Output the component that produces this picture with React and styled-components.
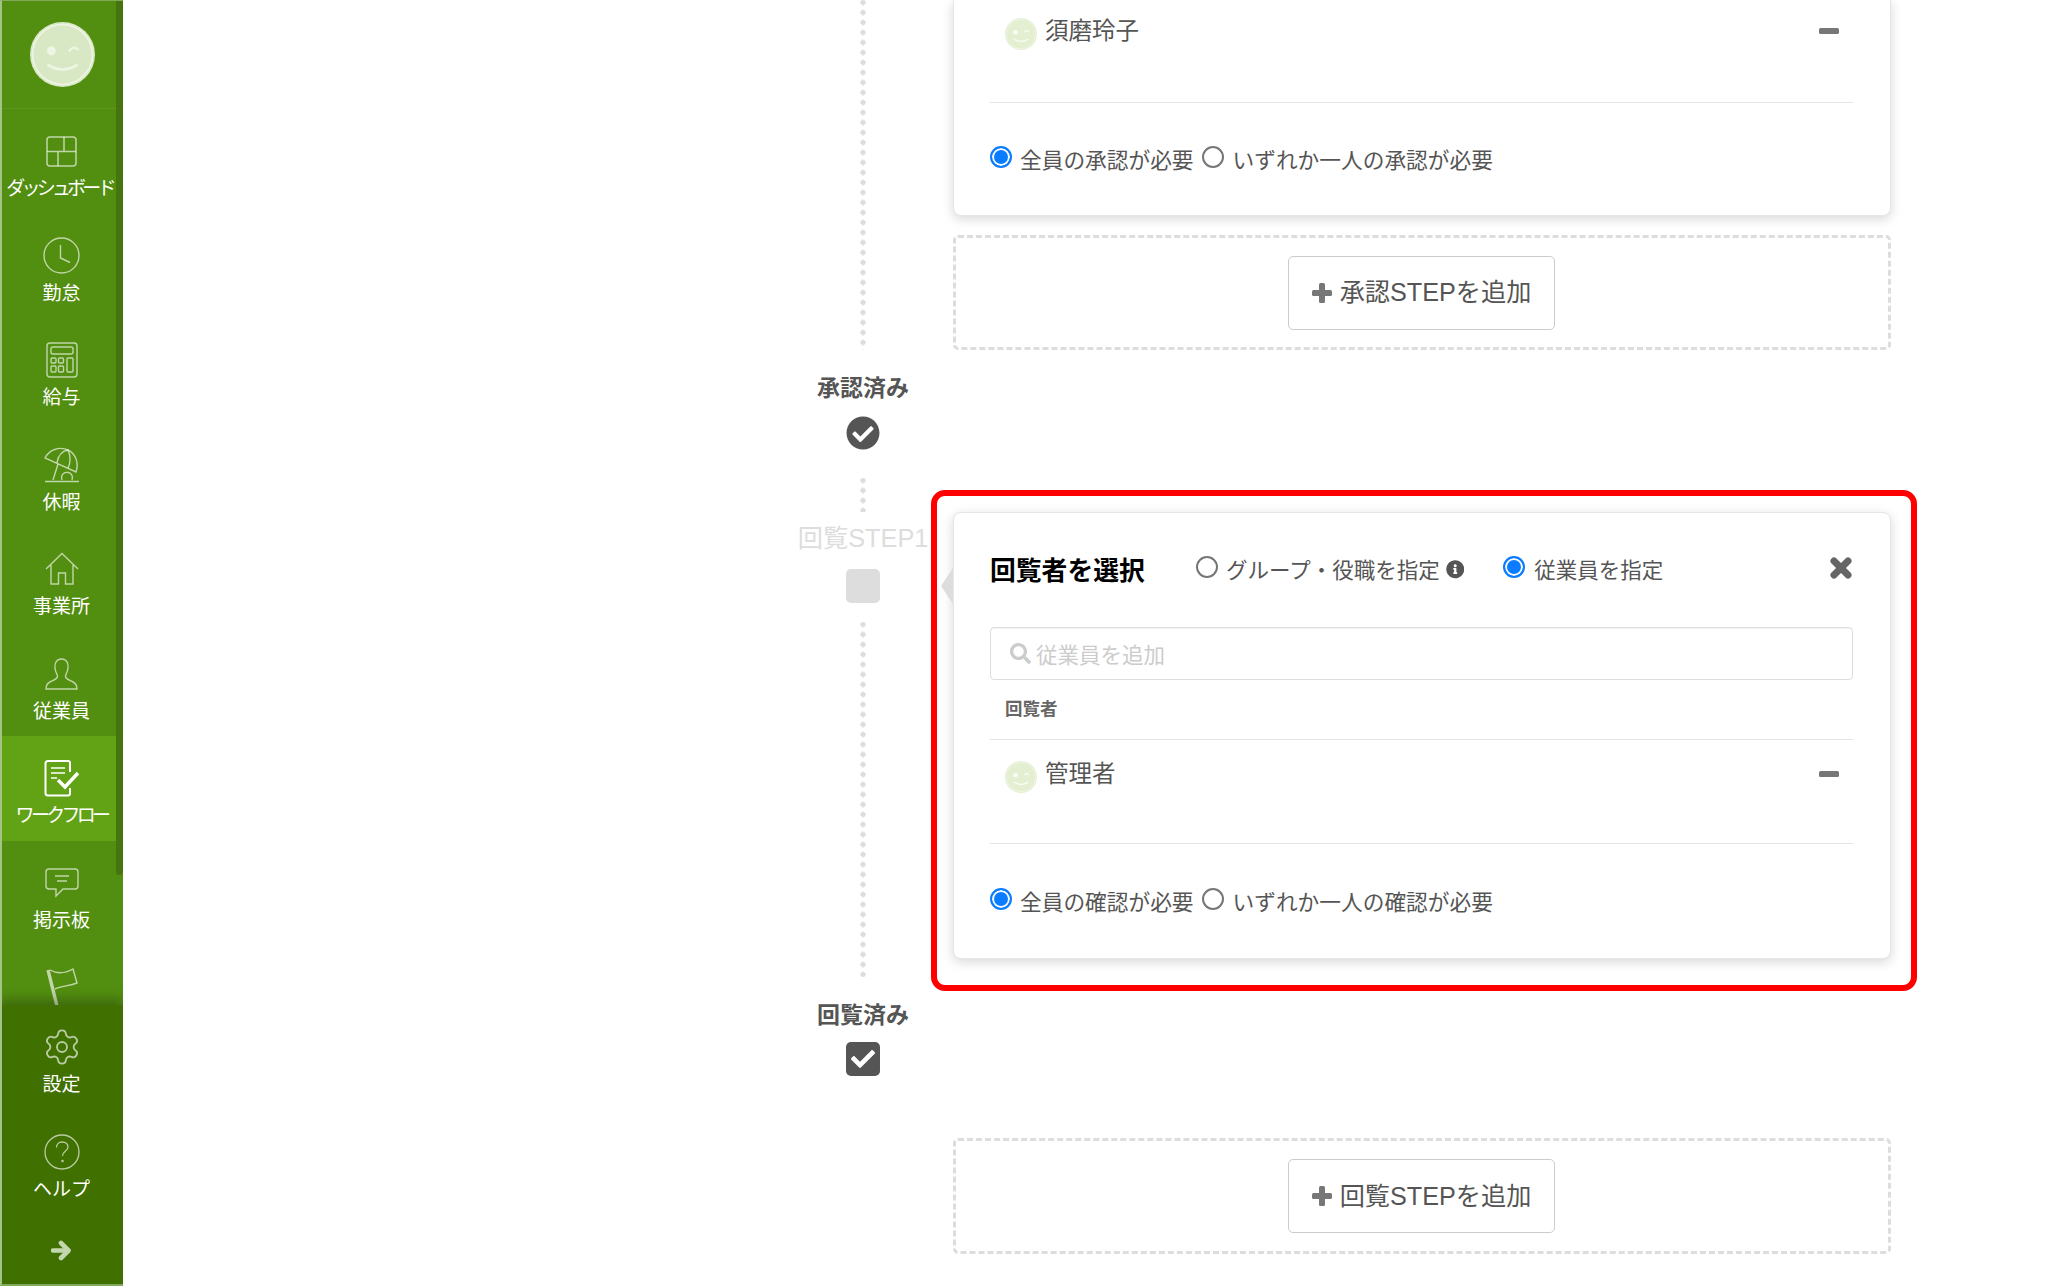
import React from 'react'
import styled, { createGlobalStyle } from 'styled-components'
import { FaCheck, FaCheckCircle, FaInfoCircle, FaSearch } from 'react-icons/fa'
import { Settings } from 'lucide-react'

const GlobalStyle = createGlobalStyle`
  html, body {
    margin: 0;
    padding: 0;
    background: #fff;
  }
  body {
    font-family: "Liberation Sans", "Noto Sans CJK JP", sans-serif;
    color: #555;
  }
`

const Page = styled.div`
  display: flex;
  width: 2048px;
  height: 1286px;
  overflow: hidden;
  background: #fff;
`

/* sidebar */

const Sidebar = styled.aside`
  position: relative;
  flex: 0 0 123px;
  display: flex;
  flex-direction: column;
  height: 1286px;
  background: #528e10;
  overflow: hidden;

  &::before {
    content: '';
    position: absolute;
    inset: 0;
    z-index: 5;
    border-left: 2px solid #a3c486;
    border-top: 1px solid #80a95a;
    border-bottom: 2px solid #80a95a;
    pointer-events: none;
  }
`

const ScrollThumb = styled.div`
  position: absolute;
  top: 0;
  right: 0;
  width: 7px;
  height: 875px;
  border-radius: 0 0 4px 4px;
  background: #46750f;
  z-index: 3;
`

const Logo = styled.div`
  flex: 0 0 109px;
  box-sizing: border-box;
  margin-bottom: -2px;
  padding: 22px 0 0 30px;
  border-bottom: 1px solid #5c9620;
`

const Nav = styled.nav`
  flex: 1;
  min-height: 0;
  overflow: hidden;
`

const NavItem = styled.div`
  position: relative;
  height: 104.5px;
  box-sizing: border-box;
  padding-top: ${p => p.$top || 26}px;
  display: flex;
  flex-direction: column;
  align-items: center;
  color: ${p => (p.$active ? '#fff' : 'rgba(255,255,255,0.64)')};

  &::before {
    content: '';
    display: ${p => (p.$active ? 'block' : 'none')};
    position: absolute;
    top: 2px;
    left: 0;
    right: 0;
    height: 105px;
    background: #62a315;
  }
  > * {
    position: relative;
  }
`

const NavIcon = styled.div`
  width: 40px;
  height: 36px;
  flex: none;
  display: flex;
  align-items: center;
  justify-content: center;
  svg {
    display: block;
    fill: none;
    stroke: currentColor;
  }
`

const NavLabel = styled.div`
  margin-top: 7px;
  height: 26px;
  line-height: 26px;
  font-size: 19px;
  color: #fff;
  white-space: nowrap;
  letter-spacing: ${p => p.$squeeze || 0}px;
  margin-left: ${p => p.$shift || 0}px;
`

const Footer = styled.div`
  position: relative;
  z-index: 2;
  flex: 0 0 281px;
  box-sizing: border-box;
  background: #3f7000;
  box-shadow: 0 -6px 10px rgba(0, 0, 0, 0.25);
`

const Collapse = styled.div`
  display: flex;
  justify-content: center;
  margin-top: 26px;
`

/* main column */

const Main = styled.main`
  flex: 1;
  padding-left: 650px;
`

const Flow = styled.div`
  width: 1118px;
  display: flex;
  flex-direction: column;
`

const StepRow = styled.div`
  display: flex;
  margin-top: ${p => p.$gap || 0}px;
`

const Rail = styled.div`
  flex: 0 0 180px;
  display: flex;
  flex-direction: column;
  align-items: center;
`

const Body = styled.div`
  flex: 0 0 938px;
  padding: ${p => p.$top || 0}px 0 ${p => p.$bottom || 0}px;
`

const Dots = styled.div`
  width: 100%;
  flex: ${p => (p.$height ? `0 0 ${p.$height}px` : '1')};
  background: radial-gradient(circle, #ddd 2.4px, transparent 3px) center -2.5px / 10px 10px repeat-y;
`

const StepName = styled.div`
  height: 30px;
  line-height: 30px;
  font-size: 23px;
  font-weight: 700;
  color: #555;
  white-space: nowrap;
`

const PendingName = styled.div`
  margin-top: 11px;
  height: 30px;
  line-height: 30px;
  font-size: 25.3px;
  color: #ddd;
  white-space: nowrap;
`

const DoneCircle = styled.div`
  margin-top: 13px;
  height: 34px;
  color: #555;
  font-size: 34px;
  line-height: 0;
`

const NodeSquare = styled.div`
  width: 34px;
  height: 34px;
  border-radius: 5px;
  background: ${p => p.$color};
  margin-top: ${p => p.$top}px;
  margin-bottom: ${p => p.$bottom || 0}px;
  display: flex;
  align-items: center;
  justify-content: center;
  color: #fff;
  font-size: 24px;
`

const Card = styled.section`
  position: relative;
  box-sizing: border-box;
  background: #fff;
  border: 1px solid #e6e6e6;
  border-top: ${p => (p.$cut ? 'none' : '1px solid #e6e6e6')};
  border-radius: ${p => (p.$cut ? '0 0 8px 8px' : '8px')};
  box-shadow: 0 3px 12px rgba(0, 0, 0, 0.16);
  padding: ${p => (p.$cut ? '0 37px 0 36px' : '37px 37px 0 36px')};
`

const CardArrow = styled.div`
  position: absolute;
  left: -13px;
  top: 55px;
  width: 0;
  height: 0;
  border-top: 18px solid transparent;
  border-bottom: 18px solid transparent;
  border-right: 12px solid #ddd;
`

const Highlight = styled.div`
  position: absolute;
  top: -23px;
  left: -23px;
  right: -27px;
  bottom: -33px;
  border: 6px solid #f00;
  border-radius: 14px;
  pointer-events: none;
`

const CardHead = styled.header`
  display: flex;
  align-items: center;
  box-sizing: border-box;
  height: 40px;
  padding-bottom: 4px;
`

const CardTitle = styled.h2`
  flex: none;
  margin: 0 52px 0 0;
  font-size: 25.8px;
  font-weight: 700;
  color: #000;
  width: 154px;
  white-space: nowrap;
`

const RadioLabel = styled.label`
  display: flex;
  align-items: center;
  gap: ${p => p.$gap || 8}px;
  margin-left: ${p => p.$before || 0}px;
  margin-right: ${p => p.$after || 0}px;
  font-size: ${p => p.$size || 21.5}px;
  color: #555;
  white-space: nowrap;
`

const Radio = styled.span`
  flex: none;
  box-sizing: border-box;
  width: 22px;
  height: 22px;
  margin-bottom: 3px;
  border-radius: 50%;
  border: 2px solid ${p => (p.$on ? '#0a7cff' : '#767676')};
  background: ${p => (p.$on ? '#0a7cff' : '#fff')};
  box-shadow: ${p => (p.$on ? 'inset 0 0 0 2px #fff' : 'none')};
`

const InfoMark = styled.span`
  display: flex;
  font-size: 18.5px;
  color: #555;
  margin-top: 3px;
`

const CloseMark = styled.span`
  margin-left: auto;
  margin-right: 1px;
  display: flex;
  color: #666;
`

const SearchBox = styled.div`
  margin-top: 37px;
  height: 53px;
  box-sizing: border-box;
  display: flex;
  align-items: center;
  gap: 5px;
  padding-left: 19px;
  border: 1px solid #ddd;
  border-radius: 4px;
  box-shadow: inset 0 1px 1px rgba(0, 0, 0, 0.05);
  color: #ccc;
  font-size: 21.5px;
  svg {
    font-size: 21px;
  }
`

const ListTitle = styled.div`
  height: 60px;
  box-sizing: border-box;
  line-height: 59px;
  padding-left: 15px;
  font-size: 17.5px;
  font-weight: 700;
  color: #666;
  border-bottom: 1px solid #e5e5e5;
`

const PersonRow = styled.div`
  height: ${p => p.$height}px;
  box-sizing: border-box;
  padding: ${p => p.$pad}px 14px 0 15px;
  display: flex;
  align-items: flex-start;
  border-bottom: 1px solid #e5e5e5;
`

const PersonName = styled.span`
  margin-left: 8px;
  margin-top: -4px;
  font-size: 23.5px;
  line-height: 34px;
  color: #555;
`

const RemoveMark = styled.span`
  margin-left: auto;
  margin-top: 10px;
  display: flex;
  color: #777;
`

const Requirement = styled.div`
  display: flex;
  align-items: flex-start;
  box-sizing: border-box;
  height: ${p => p.$height}px;
  padding-top: ${p => p.$pad}px;
`

const AddBox = styled.div`
  box-sizing: border-box;
  height: ${p => p.$height}px;
  margin-top: ${p => p.$top || 0}px;
  padding-right: 1px;
  display: flex;
  align-items: center;
  justify-content: center;
  border: 3px dashed #ddd;
  border-radius: 5px;
`

const AddButton = styled.div`
  box-sizing: border-box;
  width: 267px;
  height: 74px;
  padding-bottom: 5px;
  display: flex;
  align-items: center;
  justify-content: center;
  gap: 8px;
  border: 1px solid #ccc;
  border-radius: 5px;
  font-size: 25.2px;
  color: #555;
  white-space: nowrap;
`

/* drawings */

const Smiley = ({ size, disc, ring, mark }) => (
  <svg width={size} height={size} viewBox="0 0 64 64" style={{ display: 'block' }}>
    <circle cx="32" cy="32" r="32" fill={disc} />
    <circle cx="32" cy="32" r="29.5" fill="none" stroke={ring} strokeWidth="1.6" />
    <circle cx="21" cy="28.5" r="4.4" fill={mark} />
    <path d="M39 28 Q43 23 47 27" fill="none" stroke={mark} strokeWidth="2.4" strokeLinecap="round" />
    <path d="M18 42.5 Q32 51 46 42.5" fill="none" stroke={mark} strokeWidth="2.4" strokeLinecap="round" />
  </svg>
)

const PlusMark = () => (
  <svg width="20" height="20" viewBox="0 0 20 20" fill="#777" style={{ marginTop: 5 }}>
    <rect x="7" y="0" width="6" height="20" rx="1.5" />
    <rect x="0" y="7" width="20" height="6" rx="1.5" />
  </svg>
)

const MinusMark = () => (
  <svg width="20" height="6" viewBox="0 0 20 6" fill="currentColor">
    <rect width="20" height="6" rx="1.5" />
  </svg>
)

const CrossMark = () => (
  <svg width="22" height="22" viewBox="0 0 22 22" fill="none" stroke="currentColor" strokeWidth="7" strokeLinecap="round">
    <path d="M4 4L18 18M18 4L4 18" />
  </svg>
)

const ArrowMark = () => (
  <svg width="21" height="21" viewBox="0 0 21 21" fill="none" stroke="#c3d7ae" strokeWidth="4.6" strokeLinejoin="round">
    <path d="M2 10.5H17" strokeLinecap="round" />
    <path d="M10 3L17.5 10.5L10 18" strokeLinecap="round" />
  </svg>
)

const GridIcon = () => (
  <svg width="31" height="31" viewBox="0 0 31 31" strokeWidth="1.5">
    <rect x="1" y="1" width="29" height="29" rx="3" />
    <path d="M1 15.5H30M18 1V15.5M12 15.5V30" />
  </svg>
)

const ClockIcon = () => (
  <svg width="37" height="37" viewBox="0 0 37 37" strokeWidth="1.4">
    <circle cx="18.5" cy="18.5" r="17.5" />
    <path d="M17.5 8V21L27 25.5" />
  </svg>
)

const CalcIcon = () => (
  <svg width="32" height="36" viewBox="0 0 32 36" strokeWidth="1.4">
    <rect x="1" y="1" width="30" height="34" rx="3" />
    <rect x="5" y="5" width="22" height="7" rx="2" />
    <rect x="5" y="16" width="5" height="5" rx="1" />
    <rect x="12.5" y="16" width="5" height="5" rx="1" />
    <rect x="5" y="24" width="5" height="6" rx="1" />
    <rect x="12.5" y="24" width="5" height="6" rx="1" />
    <rect x="21" y="16" width="6" height="14" rx="1" />
  </svg>
)

const UmbrellaIcon = () => (
  <svg width="36" height="36" viewBox="0 0 36 36" strokeWidth="1.4">
    <path d="M1 11 C5 3 15 -1 24 3 C32 7 35 16 32 25 Z" />
    <path d="M13 16 C14 9 18 4 24 3 C27 10 26 17 24 21" />
    <path d="M14 17 L9 33" />
    <path d="M1 34.5H35" />
    <path d="M18 33 A5.5 5.5 0 1 1 28 33" />
  </svg>
)

const HouseIcon = () => (
  <svg width="34" height="34" viewBox="0 0 34 34" strokeWidth="1.4">
    <path d="M1 17 L17 1.5 L33 17" />
    <path d="M6 13 V32 H13.5 V21 H20.5 V32 H28 V13" />
  </svg>
)

const PersonIcon = () => (
  <svg width="33" height="32" viewBox="0 0 33 32" strokeWidth="1.4">
    <path d="M16.5 1 C11.5 1 9.5 5 10 10 C10.4 14 12 16 12.5 18 C12.8 21 9 22 5 24 C2 25.5 1 28 1 31 H32 C32 28 31 25.5 28 24 C24 22 20.2 21 20.5 18 C21 16 22.6 14 23 10 C23.5 5 21.5 1 16.5 1 Z" />
  </svg>
)

const WorkflowIcon = () => (
  <svg width="36" height="37" viewBox="0 0 36 37" strokeWidth="2">
    <path d="M26 12 V3 C26 2 25 1 24 1 H4 C2.5 1 1.5 2 1.5 3.5 V33 C1.5 34.5 2.5 35.5 4 35.5 H24 C25 35.5 26 34.5 26 33 V28" />
    <path d="M7 8H21M7 13H21M7 18H13" strokeWidth="1.6" />
    <path d="M14 20 L21 27 L34 13" strokeWidth="3.4" />
  </svg>
)

const BubbleIcon = () => (
  <svg width="34" height="30" viewBox="0 0 34 30" strokeWidth="1.4">
    <path d="M4 1 H30 C32 1 33 2 33 4 V18 C33 20 32 21 30 21 H18 L11 28 V21 H4 C2 21 1 20 1 18 V4 C1 2 2 1 4 1 Z" />
    <path d="M10 8H24M12 13H22" />
  </svg>
)

const FlagIcon = () => (
  <svg width="32" height="38" viewBox="0 0 32 38" strokeWidth="1.4">
    <path d="M2 2 L11 38" strokeWidth="3.4" />
    <path d="M4 2 C11 6 18 6 27 1 L31 15 C23 18 16 18 9 21" />
  </svg>
)

const HelpIcon = () => (
  <svg width="36" height="36" viewBox="0 0 36 36" strokeWidth="1.3">
    <circle cx="18" cy="18" r="17" />
    <path d="M12.5 13.5 C12.5 10 15 8 18 8 C21.5 8 24 10 24 13 C24 17 18.5 17 18.5 22" />
    <circle cx="18.5" cy="27" r="0.6" />
  </svg>
)

const navItems = [
  { label: 'ダッシュボード', icon: <GridIcon />, squeeze: -3.8, shift: -4 },
  { label: '勤怠', icon: <ClockIcon /> },
  { label: '給与', icon: <CalcIcon /> },
  { label: '休暇', icon: <UmbrellaIcon /> },
  { label: '事業所', icon: <HouseIcon /> },
  { label: '従業員', icon: <PersonIcon /> },
  { label: 'ワークフロー', icon: <WorkflowIcon />, squeeze: -3.7, active: true },
  { label: '掲示板', icon: <BubbleIcon /> },
  { label: '', icon: <FlagIcon /> },
]

const Avatar = () => <Smiley size={32} disc="#e4efd2" ring="#eff6e6" mark="#fafdf5" />

const Person = ({ name, height, pad }) => (
  <PersonRow $height={height} $pad={pad}>
    <Avatar />
    <PersonName>{name}</PersonName>
    <RemoveMark><MinusMark /></RemoveMark>
  </PersonRow>
)

const Needs = ({ word, height, pad }) => (
  <Requirement $height={height} $pad={pad}>
    <RadioLabel $gap={8} $after={8} $size={21.7}><Radio $on />全員の{word}が必要</RadioLabel>
    <RadioLabel $gap={9} $size={21.7}><Radio />いずれか一人の{word}が必要</RadioLabel>
  </Requirement>
)

const AddStep = ({ label, height, top }) => (
  <AddBox $height={height} $top={top}>
    <AddButton><PlusMark />{label}</AddButton>
  </AddBox>
)

const App = () => {
  return (
    <Page>
      <GlobalStyle />
      <Sidebar>
        <ScrollThumb />
        <Logo><Smiley size={65} disc="#d9e8c4" ring="#eef5e4" mark="#eef5e4" /></Logo>
        <Nav>
          {navItems.map((item, i) => (
            <NavItem key={i} $active={item.active}>
              <NavIcon>{item.icon}</NavIcon>
              <NavLabel $squeeze={item.squeeze} $shift={item.shift}>{item.label}</NavLabel>
            </NavItem>
          ))}
        </Nav>
        <Footer>
          <NavItem $top={24}>
            <NavIcon><Settings size={40} strokeWidth={1.1} /></NavIcon>
            <NavLabel>設定</NavLabel>
          </NavItem>
          <NavItem $top={24}>
            <NavIcon><HelpIcon /></NavIcon>
            <NavLabel>ヘルプ</NavLabel>
          </NavItem>
          <Collapse><ArrowMark /></Collapse>
        </Footer>
      </Sidebar>

      <Main>
        <Flow>
          <StepRow>
            <Rail><Dots $height={350} /></Rail>
            <Body>
              <Card $cut>
                <Person name="須磨玲子" height={103} pad={18} />
                <Needs word="承認" height={112} pad={40} />
              </Card>
              <AddStep label="承認STEPを追加" height={115} top={19} />
            </Body>
          </StepRow>

          <StepRow $gap={23}>
            <Rail>
              <StepName>承認済み</StepName>
              <DoneCircle><FaCheckCircle /></DoneCircle>
            </Rail>
          </StepRow>

          <StepRow $gap={28}>
            <Rail>
              <Dots $height={34} />
              <PendingName>回覧STEP1</PendingName>
              <NodeSquare $color="#ddd" $top={16} $bottom={19} />
              <Dots />
            </Rail>
            <Body $top={34} $bottom={18}>
              <Card>
                <CardArrow />
                <Highlight />
                <CardHead>
                  <CardTitle>回覧者を選択</CardTitle>
                  <RadioLabel $after={6}><Radio />グループ・役職を指定</RadioLabel>
                  <InfoMark><FaInfoCircle /></InfoMark>
                  <RadioLabel $before={39} $gap={9}><Radio $on />従業員を指定</RadioLabel>
                  <CloseMark><CrossMark /></CloseMark>
                </CardHead>
                <SearchBox><FaSearch />従業員を追加</SearchBox>
                <ListTitle>回覧者</ListTitle>
                <Person name="管理者" height={104} pad={21} />
                <Needs word="確認" height={114} pad={41} />
              </Card>
            </Body>
          </StepRow>

          <StepRow $gap={23}>
            <Rail>
              <StepName>回覧済み</StepName>
              <NodeSquare $color="#555" $top={12}><FaCheck /></NodeSquare>
            </Rail>
          </StepRow>

          <StepRow $gap={62}>
            <Rail />
            <Body><AddStep label="回覧STEPを追加" height={116} /></Body>
          </StepRow>
        </Flow>
      </Main>
    </Page>
  )
}

export default App
